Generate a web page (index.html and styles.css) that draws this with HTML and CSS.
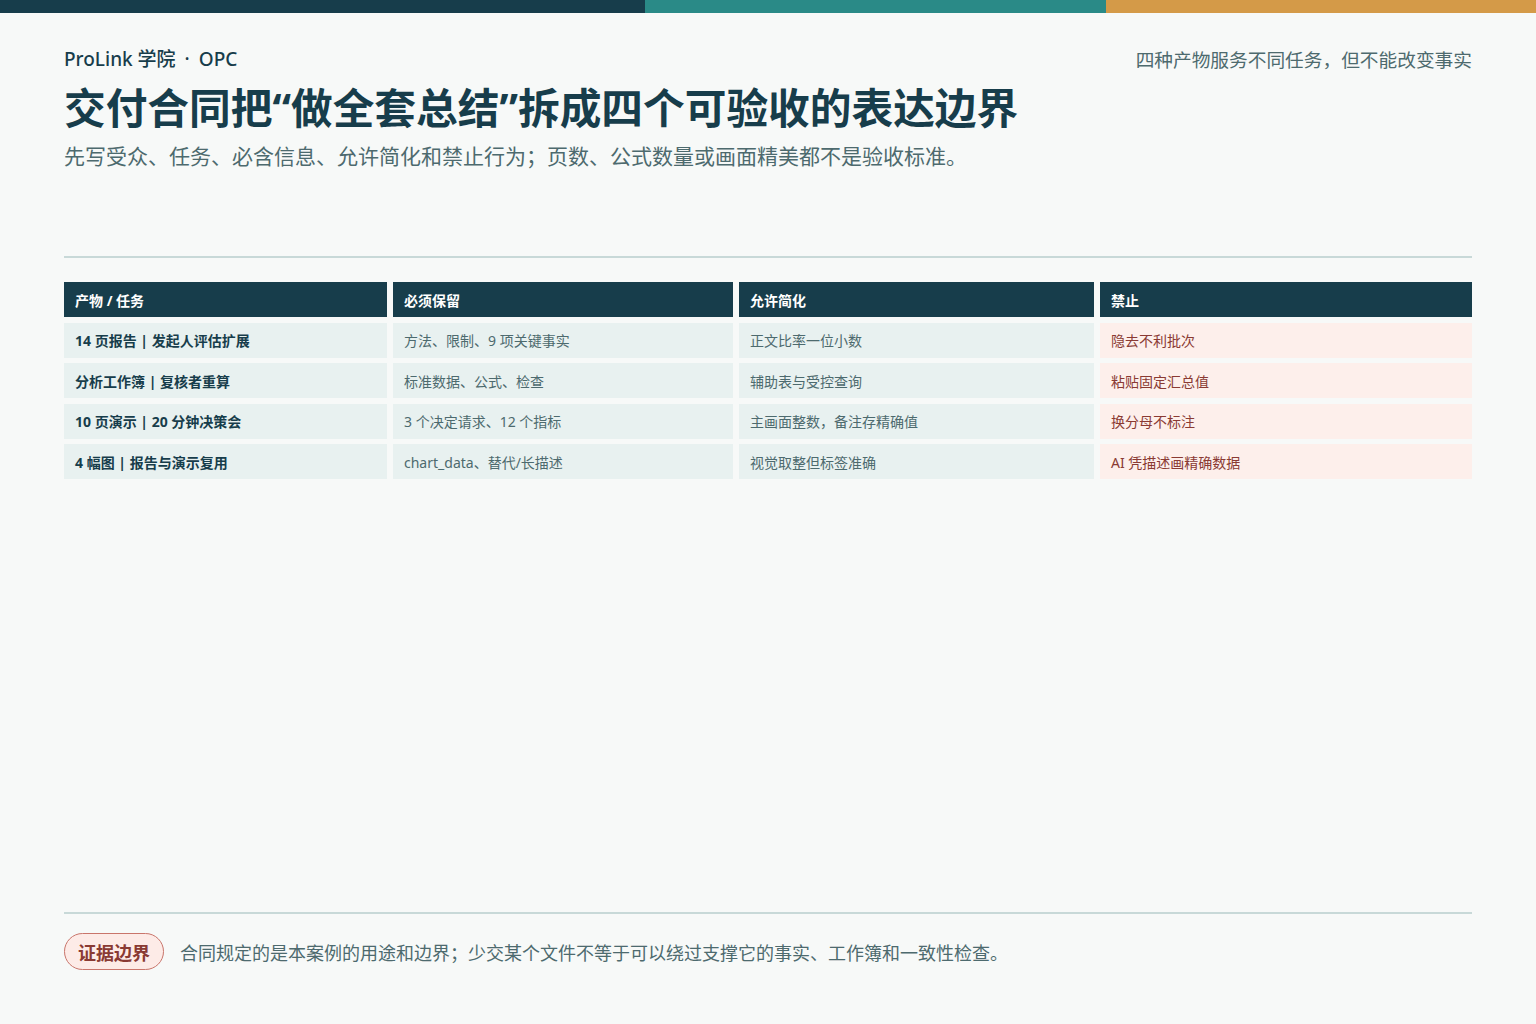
FILE: index.html
```html
<!DOCTYPE html>
<html lang="zh-CN">
<head>
<meta charset="utf-8">
<title>交付合同</title>
<link rel="stylesheet" href="styles.css">
</head>
<body>
<div class="page">
  <div class="topbar"><span class="seg seg-navy"></span><span class="seg seg-teal"></span><span class="seg seg-orange"></span></div>
  <div class="content">
    <header class="header">
      <div class="meta">
        <span class="brand">ProLink 学院<span class="dot">·</span>OPC</span>
        <span class="tagline">四种产物服务不同任务，但不能改变事实</span>
      </div>
      <h1 class="title">交付合同把“做全套总结”拆成四个可验收的表达边界</h1>
      <p class="subtitle">先写受众、任务、必含信息、允许简化和禁止行为；页数、公式数量或画面精美都不是验收标准。</p>
    </header>
    <div class="rule"></div>
    <div class="table">
      <div class="cell head">产物 / 任务</div>
      <div class="cell head">必须保留</div>
      <div class="cell head">允许简化</div>
      <div class="cell head">禁止</div>

      <div class="cell task">14 页报告 | 发起人评估扩展</div>
      <div class="cell">方法、限制、9 项关键事实</div>
      <div class="cell">正文比率一位小数</div>
      <div class="cell ban">隐去不利批次</div>

      <div class="cell task">分析工作簿 | 复核者重算</div>
      <div class="cell">标准数据、公式、检查</div>
      <div class="cell">辅助表与受控查询</div>
      <div class="cell ban">粘贴固定汇总值</div>

      <div class="cell task">10 页演示 | 20 分钟决策会</div>
      <div class="cell">3 个决定请求、12 个指标</div>
      <div class="cell">主画面整数，备注存精确值</div>
      <div class="cell ban">换分母不标注</div>

      <div class="cell task">4 幅图 | 报告与演示复用</div>
      <div class="cell">chart_data、替代/长描述</div>
      <div class="cell">视觉取整但标签准确</div>
      <div class="cell ban">AI 凭描述画精确数据</div>
    </div>
    <div class="spacer"></div>
    <footer class="footer">
      <span class="badge">证据边界</span>
      <span class="note">合同规定的是本案例的用途和边界；少交某个文件不等于可以绕过支撑它的事实、工作簿和一致性检查。</span>
    </footer>
  </div>
</div>
</body>
</html>
```

FILE: styles.css
```css
* { box-sizing: border-box; }
html, body {
  margin: 0;
  padding: 0;
  background: #f7f9f8;
}
body {
  font-family: "Noto Sans", "Noto Sans CJK SC", sans-serif;
  color: #173d4b;
}
.page {
  width: 1536px;
  height: 1024px;
  display: flex;
  flex-direction: column;
}
.topbar {
  display: flex;
  height: 13px;
  flex: none;
}
.seg { display: block; height: 100%; }
.seg-navy { flex: 645; background: #173d4b; }
.seg-teal { flex: 461; background: #2a8a87; }
.seg-orange { flex: 430; background: #d49a48; }

.content {
  flex: 1;
  display: flex;
  flex-direction: column;
  padding: 33px 64px 54px;
}
.meta {
  display: flex;
  justify-content: space-between;
  align-items: center;
  height: 24px;
}
.brand {
  font-size: 19px;
  font-weight: 500;
  color: #173d4b;
}
.dot {
  margin: 0 9px;
}
.tagline {
  font-size: 18.7px;
  color: #4d6a6e;
}
.title {
  margin: 12px 0 0;
  font-size: 41.7px;
  line-height: 52px;
  font-weight: 700;
  color: #173d4b;
}
.subtitle {
  margin: 8px 0 0;
  font-size: 21px;
  line-height: 28px;
  color: #4d6a6e;
}
.rule {
  margin-top: 86px;
  height: 2px;
  background: #c8d9d8;
}
.table {
  margin-top: 24px;
  display: grid;
  grid-template-columns: 323fr 340fr 355fr 372fr;
  grid-auto-rows: 35px;
  column-gap: 6px;
  row-gap: 5.5px;
}
.cell {
  display: flex;
  align-items: center;
  padding: 0 11px;
  background: #e8f1f0;
  font-size: 14px;
  color: #4d6a6e;
  white-space: nowrap;
}
.cell.head {
  background: #173d4b;
  color: #ffffff;
  font-weight: 700;
}
.cell.task {
  color: #173d4b;
  font-weight: 700;
}
.cell.ban {
  background: #fdefeb;
  color: #8a3a33;
}
.spacer { flex: 1; }
.footer {
  border-top: 2px solid #c8d9d8;
  padding-top: 19px;
  display: flex;
  align-items: center;
  gap: 16px;
}
.badge {
  display: inline-flex;
  align-items: center;
  justify-content: center;
  height: 37px;
  padding: 0 13px;
  border: 1px solid #c9756b;
  border-radius: 19px;
  background: #fdebe7;
  color: #8a3a33;
  font-size: 18px;
  font-weight: 700;
}
.note {
  font-size: 18px;
  color: #4d6a6e;
}
```
